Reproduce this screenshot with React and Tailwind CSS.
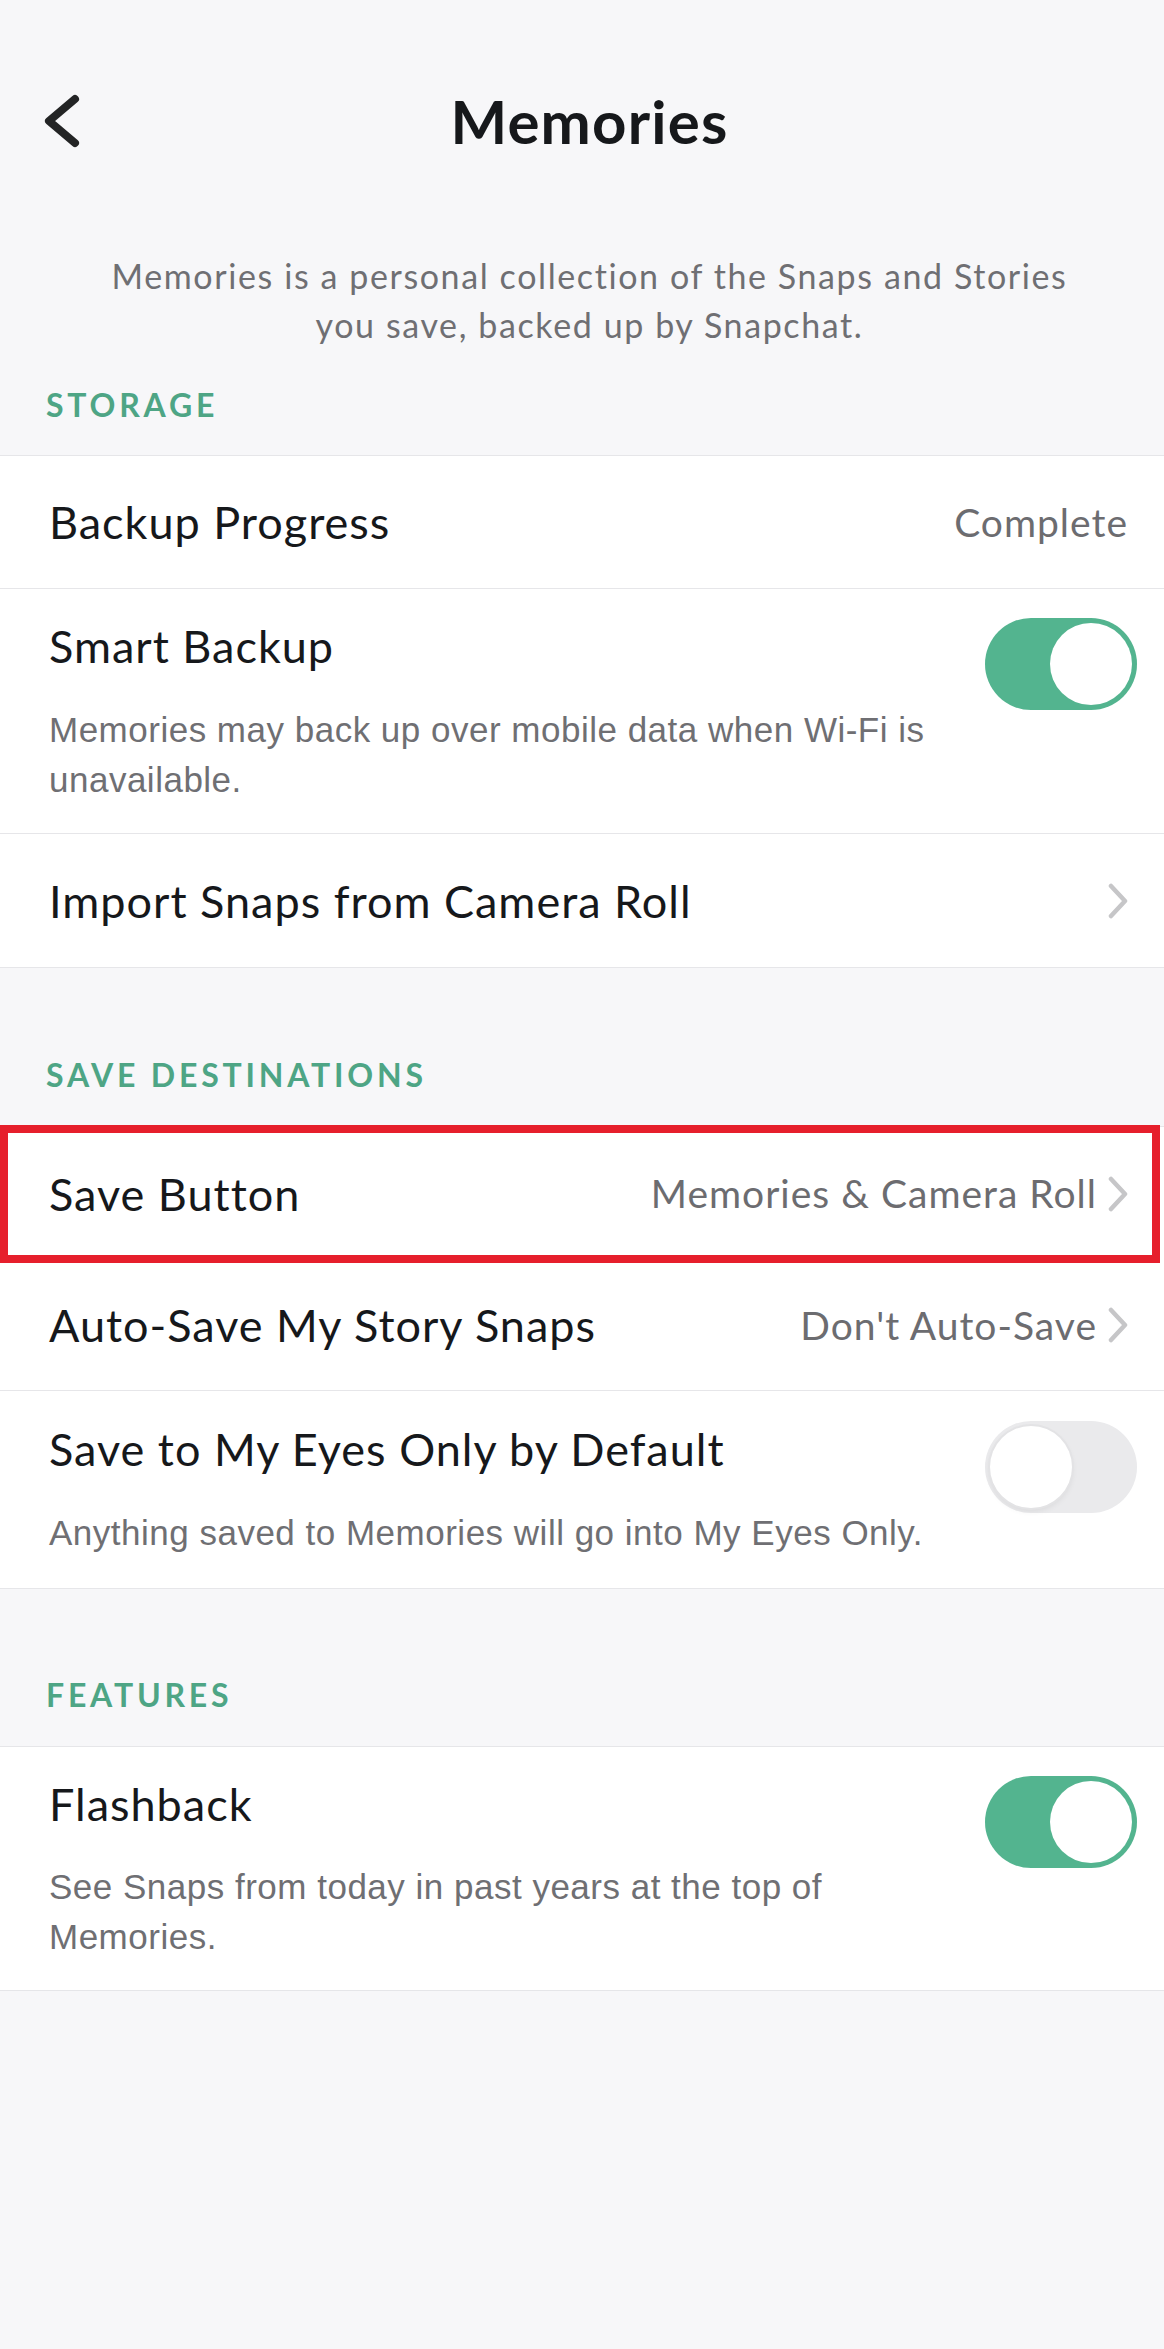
import React from 'react'

const sans = "font-['Lato','Noto_Sans',sans-serif]"
const helv = "font-['Liberation_Sans',Arial,sans-serif]"

function BackChevron() {
  return (
    <svg width="44" height="62" viewBox="0 0 44 62" fill="none">
      <polyline
        points="35,9 9,31 35,53"
        stroke="#232425"
        strokeWidth="8"
        strokeLinecap="round"
        strokeLinejoin="round"
      />
    </svg>
  )
}

function NextChevron() {
  return (
    <svg width="20" height="36" viewBox="0 0 20 36" fill="none" className="shrink-0">
      <polyline
        points="3,3 17,18 3,33"
        stroke="#c6c6c8"
        strokeWidth="4.5"
        strokeLinecap="round"
        strokeLinejoin="round"
      />
    </svg>
  )
}

function Toggle({ on }) {
  if (on) {
    return (
      <div className="flex h-[92px] w-[152px] shrink-0 items-center justify-end rounded-full bg-[#53b48f] p-[5px]">
        <div className="h-[82px] w-[82px] rounded-full bg-white" />
      </div>
    )
  }
  return (
    <div className="flex h-[92px] w-[152px] shrink-0 items-center rounded-full bg-[#eaeaec] p-[5px]">
      <div className="h-[82px] w-[82px] rounded-full bg-white shadow-[0_0_0_2px_#e3e3e5,0_3px_6px_rgba(0,0,0,0.08)]" />
    </div>
  )
}

function SectionHeader({ title, top, bottom }) {
  return (
    <div className={`${sans} ${top} ${bottom} pl-[46px] text-[32px] font-bold leading-[32px] tracking-[3.8px] text-[#4ea585]`}>
      {title}
    </div>
  )
}

function ValueRow({ label, value, chevron, height, border = true }) {
  return (
    <div className={`flex ${height} items-center justify-between pl-[49px] pr-[36px] ${border ? 'border-b border-[#e6e6e9]' : ''}`}>
      <span className={`${sans} text-[45px] leading-[56px] tracking-[1px] text-[#16181b]`}>{label}</span>
      <div className="flex items-center gap-[11px]">
        {value && <span className={`${sans} text-[39px] tracking-[1px] text-[#6c6c70]`}>{value}</span>}
        {chevron && <NextChevron />}
      </div>
    </div>
  )
}

function ToggleRow({ label, note, on, pt, mt, pb, border = true }) {
  return (
    <div className={`pl-[49px] pr-[27px] ${pt} ${pb} ${border ? 'border-b border-[#e6e6e9]' : ''}`}>
      <div className="flex items-start justify-between">
        <span className={`${sans} text-[45px] leading-[56px] tracking-[1px] text-[#16181b]`}>{label}</span>
        {/* switch hangs below the title line without pushing the note down */}
        <div className="-mb-[36px]">
          <Toggle on={on} />
        </div>
      </div>
      <p className={`${helv} ${mt} max-w-[905px] text-[35px] leading-[50px] tracking-[0.5px] text-[#6f6f73]`}>{note}</p>
    </div>
  )
}

export default function App() {
  return (
    <div className="min-h-[2349px] w-full bg-[#f7f7f9]">
      {/* nav bar */}
      <div className="grid h-[242px] grid-cols-[1fr_auto_1fr] items-center">
        <div className="pl-[40px]">
          <BackChevron />
        </div>
        <h1 className={`${sans} pl-[15px] text-[60px] font-bold tracking-[1.2px] text-[#16181b]`}>Memories</h1>
        <div />
      </div>

      <p className={`${sans} mt-[9px] pl-[75px] pr-[60px] text-center text-[34px] leading-[49px] tracking-[1.6px] text-[#6f6f73]`}>
        Memories is a personal collection of the Snaps and Stories
        <br />
        you save, backed up by Snapchat.
      </p>

      <SectionHeader title="STORAGE" top="pt-[40px]" bottom="pb-[34px]" />
      <div className="border-t border-[#e6e6e9] bg-white">
        <ValueRow label="Backup Progress" value="Complete" height="h-[133px]" />
        <ToggleRow
          label="Smart Backup"
          note="Memories may back up over mobile data when Wi-Fi is unavailable."
          on
          pt="pt-[29px]"
          mt="mt-[31px]"
          pb="pb-[28px]"
        />
        <ValueRow label="Import Snaps from Camera Roll" chevron height="h-[134px]" />
      </div>

      <SectionHeader title="SAVE DESTINATIONS" top="pt-[91px]" bottom="pb-[35px]" />
      <div className="border-t border-[#e6e6e9] bg-white">
        <div className="relative">
          <ValueRow label="Save Button" value="Memories & Camera Roll" chevron height="h-[133px]" border={false} />
          {/* highlight frame */}
          <div className="pointer-events-none absolute -top-[2px] bottom-[-3px] left-0 right-[4px] border-[8px] border-[#e61f2c]" />
        </div>
        <ValueRow label="Auto-Save My Story Snaps" value="Don't Auto-Save" chevron height="h-[131px]" />
        <ToggleRow
          label="Save to My Eyes Only by Default"
          note="Anything saved to Memories will go into My Eyes Only."
          pt="pt-[30px]"
          mt="mt-[31px]"
          pb="pb-[30px]"
        />
      </div>

      <SectionHeader title="FEATURES" top="pt-[90px]" bottom="pb-[35px]" />
      <div className="border-y border-[#e6e6e9] bg-white">
        <ToggleRow
          label="Flashback"
          note="See Snaps from today in past years at the top of Memories."
          on
          pt="pt-[29px]"
          mt="mt-[30px]"
          pb="pb-[28px]"
          border={false}
        />
      </div>
    </div>
  )
}
